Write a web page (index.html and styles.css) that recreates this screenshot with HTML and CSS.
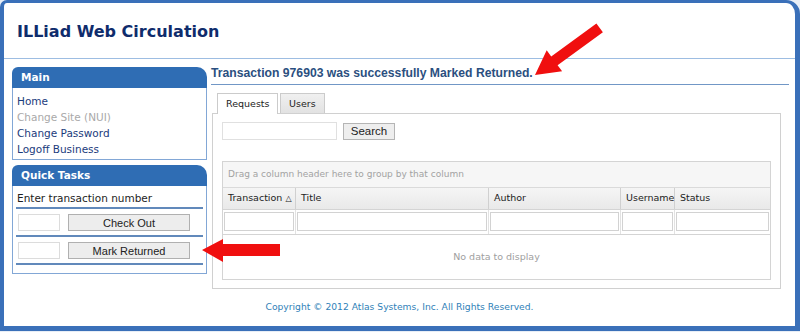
FILE: index.html
```html
<!DOCTYPE html>
<html lang="en">
<head>
    <meta charset="UTF-8">
    <title>ILLiad Web Circulation</title>
    <link rel="stylesheet" href="styles.css">
</head>
<body>

    <div class="frame">
        <!-- Page title -->
        <header class="masthead">
            <h1>ILLiad Web Circulation</h1>
        </header>

        <div class="layout">
            <!-- Left menu -->
            <aside class="sidebar">
                <section class="box">
                    <h2 class="box-title">Main</h2>
                    <ul class="nav">
                        <li><a href="#">Home</a></li>
                        <li><span class="disabled">Change Site (NUI)</span></li>
                        <li><a href="#">Change Password</a></li>
                        <li><a href="#">Logoff Business</a></li>
                    </ul>
                </section>

                <section class="box">
                    <h2 class="box-title">Quick Tasks</h2>
                    <div class="box-body quick">
                        <p class="hint">Enter transaction number</p>
                        <div class="task-row">
                            <input type="text" class="tn-input">
                            <button class="task-btn">Check Out</button>
                        </div>
                        <div class="task-row">
                            <input type="text" class="tn-input">
                            <button class="task-btn">Mark Returned</button>
                        </div>
                    </div>
                </section>
            </aside>

            <!-- Main content -->
            <main class="content">
                <h2 class="status">Transaction 976903 was successfully Marked Returned.</h2>

                <div class="tabs">
                    <span class="tab active">Requests</span>
                    <span class="tab">Users</span>
                </div>

                <div class="tab-panel">
                    <div class="search-row">
                        <input type="text" class="search-input">
                        <button class="search-btn">Search</button>
                    </div>

                    <div class="grid">
                        <div class="group-panel">Drag a column header here to group by that column</div>
                        <div class="grid-row grid-head">
                            <div class="cell">Transaction <span class="sort">&#9651;</span></div>
                            <div class="cell">Title</div>
                            <div class="cell">Author</div>
                            <div class="cell">Username</div>
                            <div class="cell">Status</div>
                        </div>
                        <div class="grid-row grid-filter">
                            <div class="cell"><input type="text"></div>
                            <div class="cell"><input type="text"></div>
                            <div class="cell"><input type="text"></div>
                            <div class="cell"><input type="text"></div>
                            <div class="cell"><input type="text"></div>
                        </div>
                        <div class="empty">No data to display</div>
                    </div>
                </div>
            </main>
        </div>

        <footer class="copyright">Copyright &copy; 2012 Atlas Systems, Inc. All Rights Reserved.</footer>
    </div>

    <!-- Red callout arrows -->
    <svg class="arrow arrow-diag" width="80" height="62" viewBox="0 0 80 62">
        <polygon points="5,57 32.1,53.3 27.6,47.2 72.9,14.2 66.4,5.4 21.2,38.4 16.7,32.3" fill="#f00f0f"/>
    </svg>
    <svg class="arrow arrow-left" width="82" height="28" viewBox="0 0 82 28">
        <polygon points="2,14 23,3 23,8 80,8 80,20 23,20 23,26" fill="#f00f0f"/>
    </svg>

</body>
</html>
```

FILE: styles.css
```css
/* Page */
body {
    margin: 0;
    width: 800px;
    height: 332px;
    overflow: hidden;
    background-color: #e8eef6;
    font-family: "DejaVu Sans", Verdana, sans-serif;
    position: relative;
}

/* Blue window frame */
.frame {
    box-sizing: border-box;
    width: 800px;
    height: 331px;
    border: 4px solid #3a70b9;
    border-top-width: 3px;
    border-right-width: 5px;
    border-bottom-width: 5px;
    border-radius: 7px 14px 0 0;
    background-color: #fff;
    display: flex;
    flex-direction: column;
}

.masthead {
    box-sizing: border-box;
    height: 56px;
    flex-shrink: 0;
    border-bottom: 1px solid #9dbde2;
    display: flex;
    align-items: center;
    padding: 2px 0 0 13px;
}

.masthead h1 {
    margin: 0;
    font-size: 16px;
    font-weight: bold;
    color: #0f2c6c;
}

.layout {
    display: flex;
    gap: 4px;
    padding: 6px 0 0 8px;
}

/* Sidebar boxes */
.sidebar {
    width: 195px;
    margin-top: 2px;
    display: flex;
    flex-direction: column;
    gap: 5px;
}

.box-title {
    margin: 0;
    height: 21px;
    line-height: 21px;
    padding-left: 9px;
    background-color: #2f6db4;
    color: #fff;
    font-size: 10.5px;
    font-weight: bold;
    border-radius: 6px 10px 0 0;
}

.nav,
.box-body {
    margin: 0;
    border: 1px solid #82a7d6;
    border-top: none;
}

.nav {
    list-style: none;
    padding: 5px 0 2px 4px;
}

.nav li {
    font-size: 10.5px;
    line-height: 16px;
}

.nav a {
    color: #1b3b7c;
    text-decoration: none;
}

.nav .disabled {
    color: #a9a9a9;
}

.quick {
    padding: 4px 3px 8px 3px;
}

.hint {
    margin: 0 0 1px 1px;
    font-size: 10.5px;
    line-height: 16px;
    color: #1d1d1d;
}

.task-row {
    border-top: 2px solid #6189bb;
    padding: 5px 0 4px 2px;
    display: flex;
    align-items: center;
    gap: 8px;
}

.task-row:last-child {
    border-bottom: 2px solid #6189bb;
}

.tn-input {
    box-sizing: border-box;
    width: 42px;
    height: 17px;
    margin: 0;
    border: 1px solid #dcdcdc;
    background: #fff;
}

.task-btn {
    box-sizing: border-box;
    width: 122px;
    height: 17px;
    margin: 0;
    padding: 0;
    border: 1px solid #b0b0b0;
    background-color: #ededed;
    font-family: "Liberation Sans", Arial, sans-serif;
    font-size: 11px;
    color: #222;
}

/* Main area */
.content {
    width: 578px;
}

.status {
    margin: 0;
    padding-bottom: 3px;
    border-bottom: 1px solid #7197c6;
    font-family: "Liberation Sans", Arial, sans-serif;
    font-size: 12.2px;
    font-weight: bold;
    line-height: 16px;
    color: #2b4f80;
}

.tabs {
    display: flex;
    gap: 2px;
    margin-top: 8px;
    padding-left: 6px;
}

.tab {
    box-sizing: border-box;
    height: 20px;
    line-height: 19px;
    padding: 0 8px;
    border: 1px solid #cbcbcb;
    border-bottom: none;
    background: linear-gradient(#f0f0f0, #e2e2e2);
    font-size: 9.5px;
    color: #222;
}

.tab.active {
    width: 61px;
    height: 21px;
    margin-bottom: -1px;
    text-align: center;
    background: #fff;
    position: relative;
}

.tab-panel {
    box-sizing: border-box;
    width: 569px;
    margin-left: 1px;
    border: 1px solid #d0d0d0;
    padding: 8px 9px 8px 9px;
}

.search-row {
    display: flex;
    align-items: center;
    gap: 6px;
}

.search-input {
    box-sizing: border-box;
    width: 115px;
    height: 18px;
    margin: 0;
    border: 1px solid #e0e0e0;
}

.search-btn {
    box-sizing: border-box;
    width: 52px;
    height: 17px;
    margin: 0;
    padding: 0;
    border: 1px solid #b5b5b5;
    background-color: #eeeeee;
    font-family: "Liberation Sans", Arial, sans-serif;
    font-size: 11.5px;
    color: #222;
}

/* Data grid */
.grid {
    width: 549px;
    box-sizing: border-box;
    margin-top: 21px;
    border: 1px solid #d4d4d4;
    font-size: 9.5px;
}

.group-panel {
    height: 25px;
    line-height: 25px;
    padding-left: 5px;
    background-color: #f6f6f6;
    border-bottom: 1px solid #dadada;
    color: #a2a2a2;
    font-size: 9px;
}

.grid-row {
    display: grid;
    grid-template-columns: 73px 193px 132px 54px 1fr;
    border-bottom: 1px solid #d4d4d4;
}

.grid-row .cell {
    border-right: 1px solid #d0d0d0;
}

.grid-row .cell:last-child {
    border-right: none;
}

.grid-head {
    height: 21px;
    background: linear-gradient(#f5f5f5, #e9e9e9);
}

.grid-head .cell {
    line-height: 20px;
    padding-left: 5px;
    color: #222;
    white-space: nowrap;
}

.sort {
    font-size: 8px;
}

.grid-filter .cell {
    box-sizing: border-box;
    height: 24px;
    padding: 2px 1px 0 1px;
    border-right-color: #e2e2e2;
}

.grid-filter input {
    box-sizing: border-box;
    width: 100%;
    height: 19px;
    margin: 0;
    border: 1px solid #d2d2d2;
}

.empty {
    height: 44px;
    line-height: 44px;
    text-align: center;
    color: #a0a0a0;
}

/* Footer */
.copyright {
    padding-top: 11px;
    line-height: 14px;
    text-align: center;
    font-size: 9.2px;
    color: #2f7fb8;
}

/* Callout arrows over the page */
.arrow {
    position: absolute;
}

.arrow-diag {
    left: 530px;
    top: 18px;
}

.arrow-left {
    left: 200px;
    top: 236px;
}
```
